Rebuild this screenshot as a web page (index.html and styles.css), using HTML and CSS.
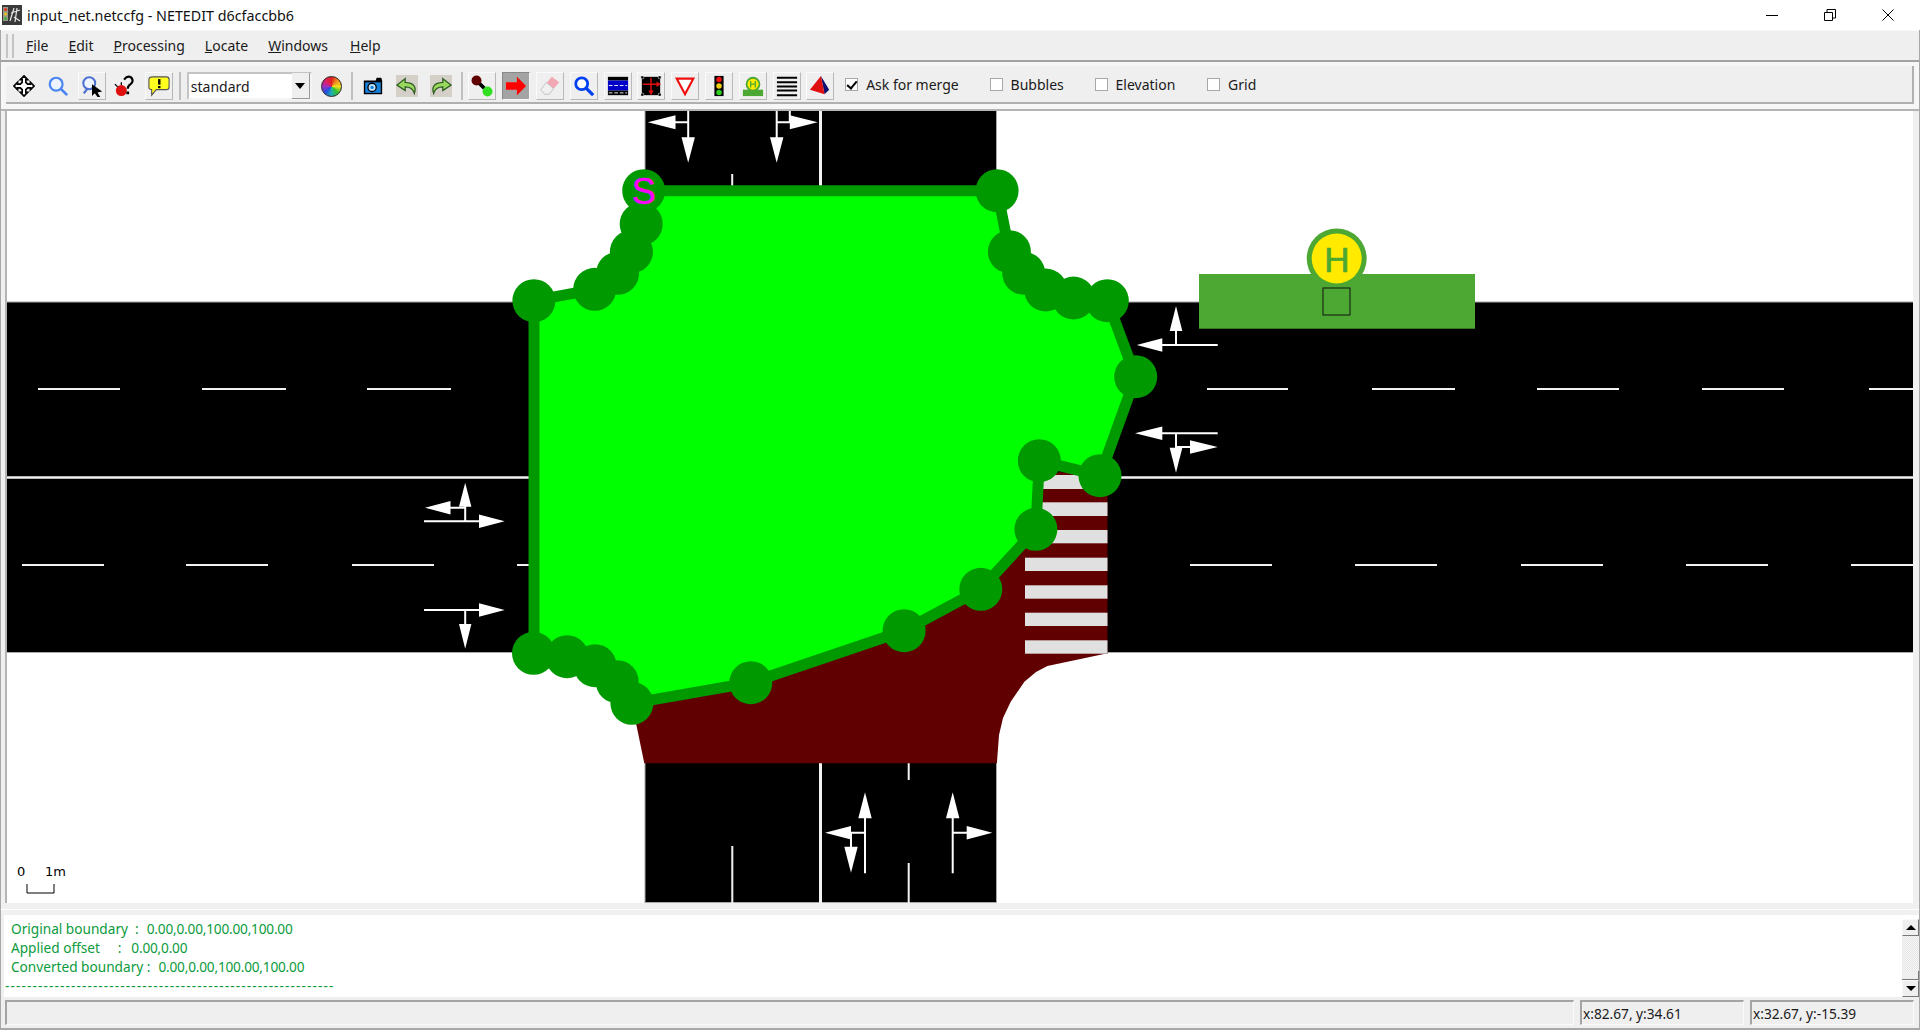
FILE: index.html
```html
<!DOCTYPE html>
<html lang="en">
<head>
    <meta charset="UTF-8">
    <meta name="viewport" content="width=device-width, initial-scale=1.0">
    <title>input_net.netccfg - NETEDIT d6cfaccbb6</title>
    <link rel="stylesheet" href="styles.css">
</head>
<body>

    <!-- Title bar -->
    <div class="titlebar">
        <svg class="app-icon" viewBox="0 0 20 20">
            <rect width="20" height="20" fill="#3a3a3a"/>
            <rect x="1" y="2" width="5" height="14" fill="#9a9a8a"/>
            <circle cx="3.5" cy="4.5" r="1.6" fill="#e03020"/>
            <circle cx="3.5" cy="9" r="1.6" fill="#e0c020"/>
            <circle cx="3.5" cy="13.5" r="1.6" fill="#40b040"/>
            <path d="M8 16 L12 3 M9 8 L18 5 M12 12 L18 16 M15 3 L13 17" stroke="#e8e8e8" stroke-width="1.2" fill="none"/>
        </svg>
        <span class="title-text">input_net.netccfg - NETEDIT d6cfaccbb6</span>
        <div class="win-buttons">
            <svg class="win-btn" viewBox="0 0 12 12"><path d="M0 6.5 H12" stroke="#000" fill="none"/></svg>
            <svg class="win-btn" viewBox="0 0 12 12"><path d="M.5 3.5 H8.5 V11.5 H.5 Z M3 3.5 V.5 H11.5 V9 H8.5" stroke="#000" fill="none"/></svg>
            <svg class="win-btn" viewBox="0 0 12 12"><path d="M.5 .5 L11.5 11.5 M11.5 .5 L.5 11.5" stroke="#000" fill="none"/></svg>
        </div>
    </div>

    <!-- Menu bar -->
    <div class="menubar">
        <div class="grip"></div>
        <span class="menu-item"><u>F</u>ile</span>
        <span class="menu-item"><u>E</u>dit</span>
        <span class="menu-item"><u>P</u>rocessing</span>
        <span class="menu-item"><u>L</u>ocate</span>
        <span class="menu-item"><u>W</u>indows</span>
        <span class="menu-item"><u>H</u>elp</span>
    </div>

    <!-- Toolbar -->
    <div class="toolbar-band">
        <div class="toolbar">
            <div class="tb-btn">
                <svg viewBox="0 0 24 24"><path d="M12 1 L16 5 H14 V8 L16 10 H19 V8 L23 12 L19 16 V14 H16 L14 16 V19 H16 L12 23 L8 19 H10 V16 L8 14 H5 V16 L1 12 L5 8 V10 H8 L10 8 V5 H8 Z" fill="#fff" stroke="#000" stroke-width="1.8"/></svg>
            </div>
            <div class="tb-btn">
                <svg viewBox="0 0 24 24"><circle cx="10" cy="10" r="7" fill="#eef4ff" stroke="#4a86f0" stroke-width="2.4"/><path d="M15 15 L22 22" stroke="#4a86f0" stroke-width="2.8"/></svg>
            </div>
            <div class="tb-btn raised">
                <svg viewBox="0 0 24 24"><circle cx="9" cy="9" r="6.5" fill="#eef4ff" stroke="#4a70d0" stroke-width="2.2"/><path d="M3 20 L7 15" stroke="#4a70d0" stroke-width="2.4"/><path d="M12 10 L23 18 L18 19 L21 24 L18 24 L15 20 L12 23 Z" fill="#000"/></svg>
            </div>
            <div class="tb-btn">
                <svg viewBox="0 0 24 24"><circle cx="8" cy="17" r="6" fill="#e01010"/><path d="M4 13 L1 10 M8 11 L8 8" stroke="#000" stroke-width="1.4"/><path d="M11 5 Q15 0 19 3 Q22 7 18 10 Q15 12 15 15" fill="none" stroke="#000" stroke-width="2.4"/><rect x="13.5" y="18" width="3" height="3" fill="#000"/></svg>
            </div>
            <div class="tb-btn raised">
                <svg viewBox="0 0 24 24"><path d="M5 2 H20 Q23 2 23 5 V13 Q23 16 20 16 H9 L4 22 V16 Q1 16 1 13 V5 Q1 2 5 2 Z" fill="#ffff20" stroke="#555" stroke-width="1.2"/><rect x="11" y="4.5" width="2.6" height="6" fill="#000"/><rect x="11" y="12" width="2.6" height="2.4" fill="#000"/></svg>
            </div>
            <div class="tb-sep"></div>
            <div class="combo">
                <span class="combo-text">standard</span>
                <span class="combo-btn"></span>
            </div>
            <div class="tb-btn"><div class="color-wheel"></div></div>
            <div class="tb-sep"></div>
            <div class="tb-btn">
                <svg viewBox="0 0 24 24"><path d="M2 6 H15 L16 3 H21 L22 6 V21 H2 Z" fill="#000"/><rect x="3.5" y="8" width="17" height="11.5" fill="#1780d8"/><circle cx="11" cy="13.5" r="4.5" fill="#bfe4ff" stroke="#000" stroke-width="1.4"/><circle cx="11" cy="13.5" r="1.8" fill="#1780d8"/></svg>
            </div>
            <div class="tb-btn shaded">
                <svg viewBox="0 0 24 24"><path d="M10 4 L1 11 L10 17 V13 Q18 13 20 20 Q24 9 10 8 Z" fill="#9ad860" stroke="#2c5a20" stroke-width="1.4"/></svg>
            </div>
            <div class="tb-btn shaded">
                <svg viewBox="0 0 24 24"><path d="M14 4 L23 11 L14 17 V13 Q6 13 4 20 Q0 9 14 8 Z" fill="#9ad860" stroke="#2c5a20" stroke-width="1.4"/></svg>
            </div>
            <div class="tb-sep"></div>
            <div class="tb-btn raised">
                <svg viewBox="0 0 24 24"><path d="M6 6 L18 18" stroke="#000" stroke-width="4"/><circle cx="6" cy="6" r="5.4" fill="#600000"/><circle cx="18" cy="18" r="5.4" fill="#30e020"/></svg>
            </div>
            <div class="tb-btn pressed">
                <svg viewBox="0 0 24 24"><path d="M1 8 H13 V2 L23 12 L13 22 V16 H1 Z" fill="#ff0000"/></svg>
            </div>
            <div class="tb-btn raised">
                <svg viewBox="0 0 24 24"><path d="M14 2 L22 8 L11 21 H6 L2 16 Z" fill="#f2a8b4"/><path d="M8 8 L16 15 L11 21 H6 L2 16 Z" fill="#f0f0f0" stroke="#c0c0c0"/></svg>
            </div>
            <div class="tb-btn raised">
                <svg viewBox="0 0 24 24"><circle cx="9.5" cy="9.5" r="6.5" fill="#fff" stroke="#0040f0" stroke-width="3"/><path d="M14 14 L22 22" stroke="#0040f0" stroke-width="3.6"/></svg>
            </div>
            <div class="tb-btn raised">
                <svg viewBox="0 0 24 24"><rect x="1" y="2" width="22" height="4" fill="#000"/><rect x="1" y="6" width="22" height="11" fill="#0000c8"/><path d="M2 11.5 H22" stroke="#fff" stroke-dasharray="4 2"/><rect x="1" y="17" width="22" height="5" fill="#000"/><path d="M2 19.5 H22" stroke="#fff" stroke-dasharray="4 2"/></svg>
            </div>
            <div class="tb-btn raised">
                <svg viewBox="0 0 24 24"><rect x="2" y="2" width="20" height="20" fill="#000"/><path d="M1 1 H4 V4 H1 Z M20 1 H23 V4 H20 Z M1 20 H4 V23 H1 Z M20 20 H23 V23 H20 Z" fill="#000" stroke="#fff" stroke-width=".5"/><path d="M12 3 V19 M3 10 H20" stroke="#e01010" stroke-width="1.6"/><path d="M12 22 L9 17 H15 Z M23 10 L18 7 V13 Z" fill="#e01010"/></svg>
            </div>
            <div class="tb-btn raised">
                <svg viewBox="0 0 24 24"><path d="M3 4 H21 L12 21 Z" fill="#fff" stroke="#f01010" stroke-width="2.4"/></svg>
            </div>
            <div class="tb-btn raised">
                <svg viewBox="0 0 24 24"><rect x="7" y="1" width="10" height="22" fill="#000"/><circle cx="12" cy="5" r="3" fill="#f01010"/><circle cx="12" cy="12" r="3" fill="#f0d010"/><circle cx="12" cy="19" r="3" fill="#30d020"/></svg>
            </div>
            <div class="tb-btn raised">
                <svg viewBox="0 0 24 24"><rect x="1" y="16" width="22" height="7" fill="#4ca832"/><circle cx="12" cy="10" r="8" fill="#4ca832"/><circle cx="12" cy="10" r="6" fill="#ffea00"/><path d="M9.5 6.5 V13.5 M14.5 6.5 V13.5 M9.5 10 H14.5" stroke="#4ca832" stroke-width="1.4"/></svg>
            </div>
            <div class="tb-btn raised">
                <svg viewBox="0 0 24 24"><path d="M1 3 H23 M1 8 H23 M1 12.5 H23 M1 17 H23 M1 22 H23" stroke="#000" stroke-width="2.2"/></svg>
            </div>
            <div class="tb-btn raised">
                <svg viewBox="0 0 24 24"><path d="M13 1 L22 16 L17 21 Z" fill="#101070"/><path d="M13 1 L17 21 L1 16 Z" fill="#e01010"/></svg>
            </div>
            <label class="check check-first"><span class="box checked"></span>Ask for merge</label>
            <label class="check check-bubbles"><span class="box"></span>Bubbles</label>
            <label class="check check-elevation"><span class="box"></span>Elevation</label>
            <label class="check check-grid"><span class="box"></span>Grid</label>
        </div>
    </div>

    <!-- Network view -->
    <div class="canvas-wrap">
        <svg class="net" viewBox="7 111 1906 792" width="1906" height="792">
            <!-- roads -->
            <g fill="#000" stroke="#a8a8a8" stroke-width="1">
                <rect x="0" y="302" width="1925" height="350.5"/>
                <rect x="645" y="100" width="351.5" height="96"/>
                <rect x="645" y="760" width="351.5" height="142.5"/>
            </g>
            <g stroke="#f2f2f2" fill="none">
                <path d="M0 477.5 H1925" stroke-width="2.4"/>
                <path d="M820.5 100 V196 M820.5 763 V903" stroke-width="3"/>
                <path d="M38 389 H120 M202 389 H286 M367 389 H451 M1207 389 H1288 M1372 389 H1455 M1537 389 H1619 M1702 389 H1784 M1869 389 H1925" stroke-width="2"/>
                <path d="M22 565 H104 M186 565 H268 M352 565 H434 M517 565 H530 M1190 565 H1272 M1355 565 H1437 M1521 565 H1603 M1686 565 H1768 M1851 565 H1925" stroke-width="2"/>
                <path d="M732.2 174 V186 M732.3 846 V903 M908.7 763 V780 M908.7 863 V903" stroke-width="2"/>
            </g>

            <!-- lane arrows -->
            <g stroke="#fff" stroke-width="2" fill="none">
                <path d="M688.2 111 V138 M688.2 122.3 H675 M776.7 111 V138 M776.7 122.3 H790 M789.8 111 V122"/>
                <path d="M1217.7 345 H1162 M1176 345 V331 M1217.7 433.3 H1162 M1176 433 V448 M1176 447 H1190"/>
                <path d="M424 521.3 H479 M465.2 521 V506 M465.2 507.7 H450 M424 610 H479 M465.2 610 V624"/>
                <path d="M865 873.3 V818 M865 832.7 H851 M851 832.7 V847 M952.7 873.3 V818 M952.7 832.7 H967"/>
            </g>
            <g fill="#fff">
                <polygon points="647.8,122.3 675.5,115.3 675.5,129.3"/>
                <polygon points="688.2,162.7 681.5,137.3 694.9,137.3"/>
                <polygon points="776.7,162.7 770,137.3 783.4,137.3"/>
                <polygon points="817.6,122.3 789.8,115.3 789.8,129.3"/>
                <polygon points="1136.7,345 1162.3,338.3 1162.3,351.7"/>
                <polygon points="1176,306 1169.7,331 1182.3,331"/>
                <polygon points="1135,433.3 1162.3,426.6 1162.3,440"/>
                <polygon points="1176,472.7 1169.7,447.7 1182.3,447.7"/>
                <polygon points="1217.7,447 1190,440.3 1190,453.7"/>
                <polygon points="504.7,521.3 479,514.6 479,528"/>
                <polygon points="465.2,482.7 459,506.7 471.4,506.7"/>
                <polygon points="425,507.7 450.5,501 450.5,514.4"/>
                <polygon points="504.7,610 479,603.3 479,616.7"/>
                <polygon points="465.2,648.7 459,624 471.4,624"/>
                <polygon points="865,792.3 858.3,818.3 871.7,818.3"/>
                <polygon points="825,832.7 851,826 851,839.4"/>
                <polygon points="851,872.7 844.3,846.7 857.7,846.7"/>
                <polygon points="952.7,792.3 946,818.3 959.4,818.3"/>
                <polygon points="992.3,832.7 966.7,826 966.7,839.4"/>
            </g>

            <!-- walking area and crossing -->
            <polygon fill="#600000" points="1030,480 1060,472 1100,476 1107.5,480 1107.5,654 1104,654 1047.4,666 1036,672 1024.4,681.7 1010.7,701.7 1003,718 999,735 996.9,763.3 644.3,763.3 636.4,725 631.9,700"/>
            <g fill="#e0e0e0">
                <rect x="1025" y="475" width="82.5" height="14"/>
                <rect x="1025" y="502.3" width="82.5" height="13.7"/>
                <rect x="1025" y="530" width="82.5" height="13.3"/>
                <rect x="1025" y="557.7" width="82.5" height="13.3"/>
                <rect x="1025" y="585.3" width="82.5" height="13.4"/>
                <rect x="1025" y="612.7" width="82.5" height="13.3"/>
                <rect x="1025" y="640.3" width="82.5" height="13.4"/>
            </g>

            <!-- junction shape -->
            <polygon fill="#00ff00" stroke="#009900" stroke-width="11" stroke-linejoin="round" points="643.7,190.7 997.1,190.7 1009.4,251.7 1023.7,273.3 1045.7,290 1073.5,298 1107.3,300.7 1135.7,376.7 1100,475.7 1039.3,460.7 1035.9,529.3 980.8,589.3 904.1,630.7 750.8,682.7 631.9,703.3 617.2,681.7 595.1,665.7 567.1,656.7 534,653.3 534,300.7 594.7,289.3 617.6,273.3 631.4,251.7 641.2,224"/>
            <g fill="#009900">
                <circle cx="643.7" cy="190.7" r="21.5"/>
                <circle cx="997.1" cy="190.7" r="21.5"/>
                <circle cx="1009.4" cy="251.7" r="21.5"/>
                <circle cx="1023.7" cy="273.3" r="21.5"/>
                <circle cx="1045.7" cy="290" r="21.5"/>
                <circle cx="1073.5" cy="298" r="21.5"/>
                <circle cx="1107.3" cy="300.7" r="21.5"/>
                <circle cx="1135.7" cy="376.7" r="21.5"/>
                <circle cx="1100" cy="475.7" r="21.5"/>
                <circle cx="1039.3" cy="460.7" r="21.5"/>
                <circle cx="1035.9" cy="529.3" r="21.5"/>
                <circle cx="980.8" cy="589.3" r="21.5"/>
                <circle cx="904.1" cy="630.7" r="21.5"/>
                <circle cx="750.8" cy="682.7" r="21.5"/>
                <circle cx="631.9" cy="703.3" r="21.5"/>
                <circle cx="617.2" cy="681.7" r="21.5"/>
                <circle cx="595.1" cy="665.7" r="21.5"/>
                <circle cx="567.1" cy="656.7" r="21.5"/>
                <circle cx="533.5" cy="653.3" r="21.5"/>
                <circle cx="533.9" cy="300.7" r="21.5"/>
                <circle cx="594.7" cy="289.3" r="21.5"/>
                <circle cx="617.6" cy="273.3" r="21.5"/>
                <circle cx="631.4" cy="251.7" r="21.5"/>
                <circle cx="641.2" cy="224" r="21.5"/>
            </g>
            <text class="label-s" x="643.7" y="203.5">S</text>

            <!-- bus stop -->
            <rect x="1199" y="274" width="276" height="54.7" fill="#4ca832"/>
            <circle cx="1336.7" cy="258.5" r="30" fill="#4ca832"/>
            <circle cx="1336.7" cy="258.5" r="25" fill="#ffea00"/>
            <text class="label-h" x="1337" y="271.7">H</text>
            <rect x="1323" y="288" width="27" height="27" fill="none" stroke="#111" stroke-width="1"/>

            <!-- scale bar -->
            <text class="scale-text" x="17" y="876">0</text>
            <text class="scale-text" x="45" y="876">1m</text>
            <path d="M27 884 V893 H54 V884" fill="none" stroke="#000" stroke-width="1"/>
        </svg>
    </div>

    <!-- Console -->
    <div class="console">
        <div class="console-text">
            <div>Original boundary&nbsp; :<span class="num">0.00,0.00,100.00,100.00</span></div>
            <div>Applied offset &nbsp; &nbsp; :<span class="num num-offset">0.00,0.00</span></div>
            <div>Converted boundary :<span class="num">0.00,0.00,100.00,100.00</span></div>
            <div class="console-rule">------------------------------------------------------------</div>
        </div>
        <div class="scrollbar">
            <div class="sb-btn"><span class="tri-up"></span></div>
            <div class="sb-track"></div>
            <div class="sb-thumb"></div>
            <div class="sb-btn"><span class="tri-down"></span></div>
        </div>
    </div>

    <!-- Status bar -->
    <div class="statusbar">
        <div class="status-cell status-main"></div>
        <div class="status-cell status-coord">x:82.67, y:34.61</div>
        <div class="status-cell status-coord">x:32.67, y:-15.39</div>
    </div>

</body>
</html>
```

FILE: styles.css
```css
* { box-sizing: border-box; }
html, body { margin: 0; padding: 0; }
body { position: relative; width: 1920px; height: 1030px; overflow: hidden; background: #f0f0f0; font-family: "Noto Sans", sans-serif; font-size: 14px; color: #1a1a1a; display: flex; flex-direction: column; }
/* window frame */
body::before, body::after { content: ""; position: absolute; top: 30px; bottom: 0; width: 1px; background: #a8a8a8; }
body::before { left: 0; }
body::after { right: 0; }

/* title bar */
.titlebar { height: 30px; background: #fff; display: flex; align-items: center; padding-left: 2px; }
.app-icon { width: 20px; height: 20px; }
.title-text { margin-left: 5px; font-size: 14.3px; color: #111; }
.win-buttons { margin-left: auto; display: flex; gap: 46px; padding-right: 26px; }
.win-btn { width: 12px; height: 12px; }

/* menu bar */
.menubar { height: 32px; background: #efefef; border-top: 1px solid #f8f8f8; border-bottom: 2px solid #a2a2a2; display: flex; align-items: center; padding-left: 6px; }
.grip { width: 8px; height: 24px; border-left: 2px solid #c4c4c4; border-right: 2px solid #c4c4c4; margin-right: 12px; }
.menu-item { margin-right: 20px; }
.menu-item:last-child { margin-left: 2px; }

/* toolbar */
.toolbar-band { height: 49px; background: #f6f6f6; padding: 4px 6px 0 6px; border-bottom: 2px solid #b4b4b4; }
.toolbar { height: 38px; background: #efefef; border-right: 2px solid #b0b0b0; border-bottom: 2px solid #b0b0b0; display: flex; align-items: center; gap: 5.8px; padding: 4px 0 0 4px; }
.tb-btn { width: 28px; height: 28px; flex: none; display: flex; align-items: center; justify-content: center; border: 1px solid transparent; }
.tb-btn svg { width: 22px; height: 22px; }
.tb-btn.raised { border-color: #fafafa #b8b8b8 #b8b8b8 #fafafa; }
.tb-btn.pressed { background: #a4a4a4; border-color: #888 #f8f8f8 #f8f8f8 #888; }
.tb-btn.shaded svg { background: #d4d0c8; }
.tb-sep { width: 2px; height: 28px; background: #c0c0c0; flex: none; }

.combo { width: 125px; height: 28px; flex: none; background: #fff; border: 2px solid #c4c4c4; border-right-color: #f4f4f4; border-bottom-color: #f4f4f4; display: flex; align-items: center; justify-content: space-between; }
.combo-text { padding-left: 2px; }
.combo-btn { width: 18px; height: 26px; background: #efefef; border-right: 1px solid #9a9a9a; border-bottom: 1px solid #9a9a9a; position: relative; }
.combo-btn::after { content: ""; position: absolute; left: 3px; top: 10px; border-left: 5px solid transparent; border-right: 5px solid transparent; border-top: 6px solid #000; }
.color-wheel { width: 21px; height: 21px; border-radius: 50%; border: 1px solid #222; background: conic-gradient(#e02020, #f09020, #f0e020, #30c030, #20b0b0, #2050e0, #a030c0, #e02060, #e02020); }

.check { display: flex; align-items: center; gap: 8px; flex: none; margin-top: -4px; }
.check-first { margin-left: 5px; }
.check-bubbles { margin-left: 25px; }
.check-elevation { margin-left: 25px; }
.check-grid { margin-left: 26px; }
.box { width: 13px; height: 13px; background: #fff; border: 1px solid #a8a8a8; position: relative; }
.box.checked::after { content: ""; position: absolute; left: 3px; top: 0; width: 4px; height: 8px; border: solid #000; border-width: 0 2px 2px 0; transform: rotate(40deg); }

/* network view */
.canvas-wrap { height: 804px; padding-left: 5px; background: linear-gradient(#f0f0f0 0 798px, #fff 798px 799px, #f0f0f0 799px); }
.net { display: block; box-sizing: content-box; background: #fff; border-left: 2px solid #b4b4b4; }

/* console */
.console { height: 82px; background: #fff; margin-left: 4px; display: flex; justify-content: space-between; padding-top: 4px; }
.console-text { padding-left: 1px; color: #0b9b3c; font-size: 13.65px; line-height: 19px; }
.console-text > div { padding-left: 6px; }
.console-text .console-rule { padding-left: 0; letter-spacing: 1.1px; }
.num { margin-left: 8px; letter-spacing: -0.2px; }
.num-offset { margin-left: 10px; }
.scrollbar { width: 17px; margin-right: 1px; display: flex; flex-direction: column; }
.sb-btn { height: 17px; flex: none; background: #efefef; border: 1px solid; border-color: #fafafa #777 #777 #fafafa; display: flex; align-items: center; justify-content: center; }
.sb-track { height: 35px; flex: none; background: repeating-conic-gradient(#f8f8f8 0 25%, #e4e4e4 0 50%) 0 0 / 2px 2px; }
.sb-thumb { height: 9px; flex: none; background: #efefef; border-bottom: 1px solid #777; border-right: 1px solid #777; }
.tri-up { border-left: 5px solid transparent; border-right: 5px solid transparent; border-bottom: 5px solid #000; }
.tri-down { border-left: 5px solid transparent; border-right: 5px solid transparent; border-top: 5px solid #000; }

/* status bar */
.statusbar { height: 33px; background: #efefef; display: flex; gap: 6px; padding: 3px 6px 5px 5px; border-bottom: 2px solid #a8a8a8; }
.status-cell { height: 25px; border-top: 2px solid #a4a4a4; border-left: 2px solid #a4a4a4; border-right: 1px solid #fafafa; border-bottom: 1px solid #fafafa; padding-left: 1px; font-size: 13.7px; line-height: 24px; white-space: nowrap; }
.status-main { flex: 1; }
.status-coord { width: 164px; flex: none; }

/* canvas labels */
.label-s { font-family: "Liberation Sans", sans-serif; font-size: 36px; fill: #ff00ff; stroke: #ff00ff; stroke-width: 0.4px; text-anchor: middle; }
.label-h { font-family: "Liberation Sans", sans-serif; font-size: 35px; fill: #4ca832; stroke: #4ca832; stroke-width: 0.7px; text-anchor: middle; }
.scale-text { font-family: "DejaVu Sans", sans-serif; font-size: 13px; fill: #000; }
```
